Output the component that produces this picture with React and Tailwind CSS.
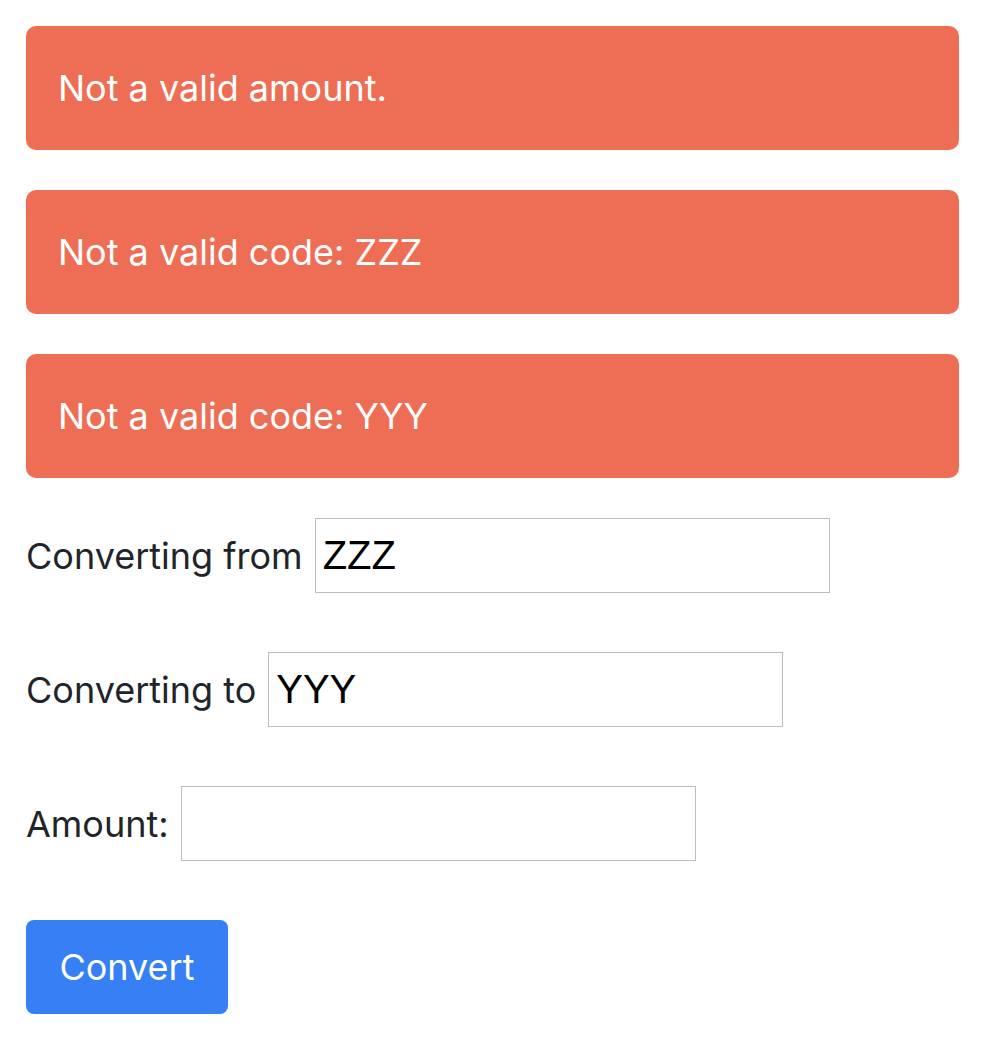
export default function App() {
  const errors = ['Not a valid amount.', 'Not a valid code: ZZZ', 'Not a valid code: YYY'];

  const fields = [
    { label: 'Converting from', value: 'ZZZ' },
    { label: 'Converting to', value: 'YYY' },
    { label: 'Amount:', value: '' },
  ];

  return (
    <div className="min-h-screen bg-white px-[26px] pt-[26px] font-['Inter',sans-serif] text-[#212529]">
      {/* alertas */}
      <div className="flex w-[933px] flex-col gap-[40px]">
        {errors.map((msg) => (
          <div
            key={msg}
            className="flex h-[124px] items-center rounded-[10px] bg-[#ee6e55] px-[32px] text-[36px] text-white"
          >
            {msg}
          </div>
        ))}
      </div>

      {/* formulario */}
      <form className="mt-[40px] flex flex-col gap-[59px]" onSubmit={(e) => e.preventDefault()}>
        {fields.map((f) => (
          <div key={f.label} className="flex h-[75px] items-center">
            <label className="text-[36px]">{f.label}</label>
            <input
              type="text"
              defaultValue={f.value}
              className="ml-[12px] h-[75px] w-[515px] border border-[#bdbdbd] px-[7px] font-['Liberation_Sans',Arial,sans-serif] text-[40px] text-black outline-none"
            />
          </div>
        ))}
        <div>
          <button
            type="submit"
            className="h-[94px] w-[202px] rounded-[8px] bg-[#367ff5] text-[36px] text-white"
          >
            Convert
          </button>
        </div>
      </form>
    </div>
  );
}
